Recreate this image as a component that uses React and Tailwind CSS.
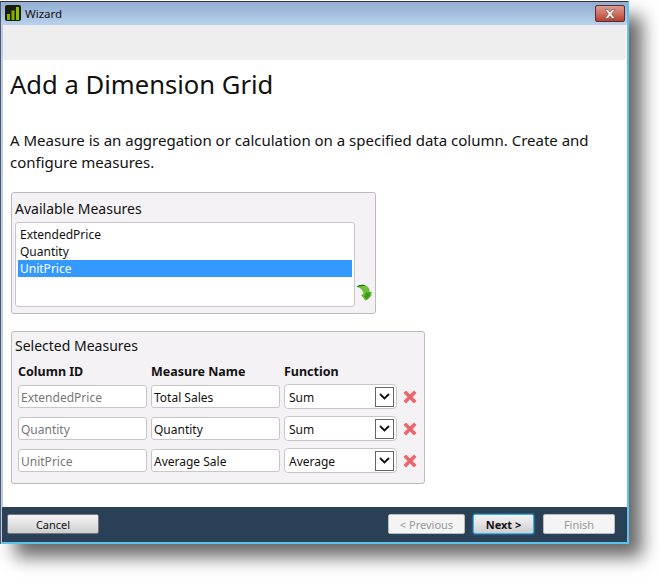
import React from "react";

const font = "font-['Noto_Sans','Open_Sans',sans-serif]";

// --- Title bar icon ---
const BarsIcon = () => (
	<svg width="16" height="16" viewBox="0 0 16 16" className="shrink-0">
		<rect x="0" y="0" width="16" height="16" rx="2" fill="#1c1c0c" />
		<rect x="2" y="9" width="3" height="6" fill="#7fb000" />
		<rect x="6.5" y="5.5" width="3" height="9.5" fill="#7fb000" />
		<rect x="11" y="2" width="3" height="13" fill="#8cc000" />
	</svg>
);

// --- Green curved arrow ---
const GreenArrow = () => (
	<svg width="16" height="17" viewBox="0 0 16 17" className="shrink-0">
		<path d="M0.5 3C3 0.5 8 0 10.5 2 13 3.5 14 6 13.5 8L15.5 7.5 15.5 11.5 12 15.5 9 16.5 7.5 14 5 11 7.5 9.5C7 7 5 3.5 0.5 3Z" fill="#6cc038" />
		<path d="M0.5 3C3 0.5 7 0.2 9.5 2 7 1.8 4 2 0.5 3Z" fill="#2f5f2a" />
		<path d="M10 8.5L14.5 8 14 12 10.5 15.5 8 12.5Z" fill="#3f9a1e" />
	</svg>
);

const RedX = () => (
	<svg width="14" height="14" viewBox="0 0 14 14" className="shrink-0">
		<path d="M3 0.5L7 4.5 11 0.5 13.5 3 9.5 7 13.5 11 11 13.5 7 9.5 3 13.5 0.5 11 4.5 7 0.5 3Z" fill="#f0636a" />
	</svg>
);

const TextBox = ({ value, muted }) => (
	<div className={`w-[129px] h-[23px] shrink-0 bg-white border border-[#c8c6c8] rounded-[3px] flex items-center pl-[2px] pt-[2px] text-[12px] ${muted ? "text-[#777]" : "text-[#111]"}`}>
		{value}
	</div>
);

const SelectBox = ({ value }) => (
	<div className="w-[113px] h-[25px] shrink-0 bg-white border border-[#c8c6c8] rounded-[4px] flex items-center justify-between pl-[4px] pr-[2px] text-[12px] text-[#111]">
		<span className="pt-[2px]">{value}</span>
		<div className="w-[19px] h-[20px] border border-[#666] bg-white flex items-center justify-center">
			<svg width="11" height="7" viewBox="0 0 11 7">
				<path d="M1 1L5.5 5.5 10 1" fill="none" stroke="#111" strokeWidth="1.8" />
			</svg>
		</div>
	</div>
);

const MeasureRow = ({ id, name, fn }) => (
	<div className="flex items-center gap-1 h-[25px]">
		<TextBox value={id} muted />
		<TextBox value={name} />
		<SelectBox value={fn} />
		<div className="ml-[2px]">
			<RedX />
		</div>
	</div>
);

const FooterButton = ({ children, className }) => (
	<div className={`h-[20px] rounded-[2px] flex items-center justify-center pt-[2px] text-[11px] ${className}`}>
		{children}
	</div>
);

export default function App() {
	return (
		<div className={`w-[659px] h-[582px] bg-white overflow-hidden ${font}`}>
			<div className="w-[629px] h-[543px] mt-px flex flex-col bg-[#b8d0ec] border-t border-l border-t-[#333] border-l-[#556] border-r-2 border-r-[#5cc4ec] shadow-[14px_14px_17px_-1px_rgba(0,0,0,0.6)]">
				{/* Title bar */}
				<div className="h-[23px] shrink-0 flex items-start justify-between pt-[3px] pl-[4px] pr-[2px] bg-gradient-to-b from-[#93aed0] to-[#b9d1ed]">
					<div className="flex items-start gap-[4px]">
						<BarsIcon />
						<span className="leading-[17px] text-[11.5px] text-[#111]">Wizard</span>
					</div>
					<div className="w-[30px] h-[17px] rounded-[2px] border border-[#5a2a35] flex items-center justify-center bg-gradient-to-b from-[#dc9a8c] via-[#d0705f] to-[#b8402a]">
						<svg width="12" height="10" viewBox="0 0 12 10">
							<path d="M1 0.5H4L6 3 8 0.5H11L7.7 5 11 9.5H8L6 7 4 9.5H1L4.3 5Z" fill="#eee" stroke="#555" strokeWidth="0.6" />
						</svg>
					</div>
				</div>

				{/* Body */}
				<div className="flex-1 flex flex-col bg-white ml-[2px]">
					<div className="h-[35px] shrink-0 mr-px bg-[#eeeeee] rounded-b-[3px]" />
					<div className="flex-1 pl-[8px] pt-[8px]">
						<h1 className="-ml-px text-[25.6px] leading-[34px] text-[#111]">Add a Dimension Grid</h1>
						<p className="-ml-px mt-[27px] w-[600px] text-[15px] leading-[22px] text-[#111]">
							A Measure is an aggregation or calculation on a specified data column. Create and configure measures.
						</p>

						{/* Available measures */}
						<div className="mt-[19px] w-[365px] h-[122px] bg-[#f5f2f6] border border-[#bdbbbd] rounded-[3px] pl-[3px] flex flex-col">
							<div className="h-[29px] shrink-0 flex items-center text-[14px] text-[#111] pt-[2px]">Available Measures</div>
							<div className="flex items-end gap-0">
								<div className="w-[340px] h-[85px] bg-white border border-[#c8c6c8] rounded-[3px] p-[2px] pt-[3px] text-[12px] text-[#111]">
									<div className="h-[17px] leading-[17px] pl-[2px]">ExtendedPrice</div>
									<div className="h-[17px] leading-[17px] pl-[2px]">Quantity</div>
									<div className="h-[17px] leading-[17px] pl-[2px] bg-[#3399ff] text-white">UnitPrice</div>
								</div>
								<div className="mb-[6px] ml-px">
									<GreenArrow />
								</div>
							</div>
						</div>

						{/* Selected measures */}
						<div className="mt-[17px] w-[414px] h-[153px] bg-[#f5f2f6] border border-[#bdbbbd] rounded-[3px] pl-[6px] flex flex-col">
							<div className="h-[27px] shrink-0 flex items-center -ml-[3px] text-[14px] text-[#111]">Selected Measures</div>
							<div className="flex h-[24px] items-center gap-1 pt-[2px] text-[12.5px] font-bold text-[#111]">
								<div className="w-[129px]">Column ID</div>
								<div className="w-[129px]">Measure Name</div>
								<div>Function</div>
							</div>
							<div className="flex flex-col gap-[7px] mt-[1px]">
								<MeasureRow id="ExtendedPrice" name="Total Sales" fn="Sum" />
								<MeasureRow id="Quantity" name="Quantity" fn="Sum" />
								<MeasureRow id="UnitPrice" name="Average Sale" fn="Average" />
							</div>
						</div>
					</div>
				</div>

				{/* Footer */}
				<div className="h-[37px] shrink-0 flex items-start justify-between pt-[7px] pl-[5px] pr-[12px] ml-px bg-[#2a4056] border-b-2 border-b-[#5cc4ec]">
					<FooterButton className="w-[92px] border border-[#777] bg-gradient-to-b from-[#f5f3f6] to-[#cfcfcf] text-[#111]">
						Cancel
					</FooterButton>
					<div className="flex gap-[8px]">
						<FooterButton className="w-[77px] border border-[#bbb] bg-[#f4f4f4] text-[#999]">{"< Previous"}</FooterButton>
						<FooterButton className="w-[61px] border border-[#3bb0e8] shadow-[0_0_2px_#3bb0e8] bg-gradient-to-b from-[#f5f3f6] to-[#cfcfcf] text-[#111] text-[11.5px] font-bold">
							{"Next >"}
						</FooterButton>
						<FooterButton className="w-[72px] ml-px border border-[#bbb] bg-[#f4f4f4] text-[#999]">Finish</FooterButton>
					</div>
				</div>
			</div>
		</div>
	);
}
